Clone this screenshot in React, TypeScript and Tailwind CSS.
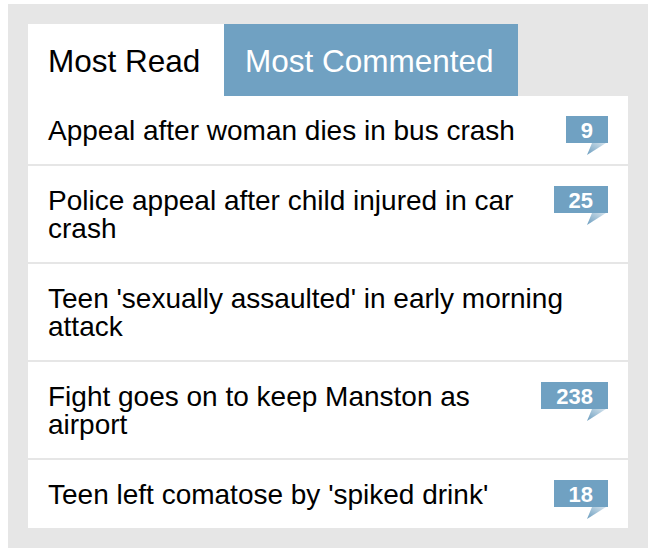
import React from 'react';

const stories = [
  { title: 'Appeal after woman dies in bus crash', comments: 9 },
  { title: 'Police appeal after child injured in car crash', comments: 25 },
  { title: "Teen 'sexually assaulted' in early morning attack", comments: 0 },
  { title: 'Fight goes on to keep Manston as airport', comments: 238 },
  { title: "Teen left comatose by 'spiked drink'", comments: 18 },
];

function CommentBadge({ count }: { count: number }) {
  return (
    <div className="relative shrink-0 self-start">
      <div className="h-[27px] overflow-hidden bg-[#70a1c2] px-[15px] text-[22px] leading-[29px] font-bold text-white">
        {count}
      </div>
      <svg
        className="absolute right-[2px] top-[27px]"
        width="19"
        height="12"
        viewBox="0 0 19 12"
      >
        <defs>
          <linearGradient id={`tail-${count}`} x1="0" y1="1" x2="1" y2="0">
            <stop offset="0%" stopColor="#6a9cbe" />
            <stop offset="100%" stopColor="#70a1c2" stopOpacity="0.3" />
          </linearGradient>
        </defs>
        <polygon points="5,0 19,0 0,12" fill={`url(#tail-${count})`} />
      </svg>
    </div>
  );
}

export default function App() {
  return (
    <div className="bg-white px-[8px] pt-[4px] font-['Liberation_Sans',Arial,sans-serif]">
      <div className="bg-[#e6e6e6] p-[20px]">
        <div className="flex h-[72px]">
          <div className="flex w-[196px] items-center bg-white px-[20px] pt-[3px] text-[31.5px] text-black">
            Most Read
          </div>
          <div className="flex w-[294px] items-center bg-[#70a1c2] px-[21px] pt-[3px] text-[31.5px] text-white">
            Most Commented
          </div>
        </div>
        <ul className="bg-white">
          {stories.map((s, i) => (
            <li
              key={i}
              className={`flex items-start gap-4 px-[20px] pt-[21px] pb-[19px] ${
                i < stories.length - 1 ? 'border-b-2 border-[#e6e6e6]' : ''
              }`}
            >
              <p className="flex-1 text-[28px] leading-[28px] text-black">{s.title}</p>
              {s.comments > 0 && (
                <div className="-mt-px">
                  <CommentBadge count={s.comments} />
                </div>
              )}
            </li>
          ))}
        </ul>
      </div>
    </div>
  );
}
